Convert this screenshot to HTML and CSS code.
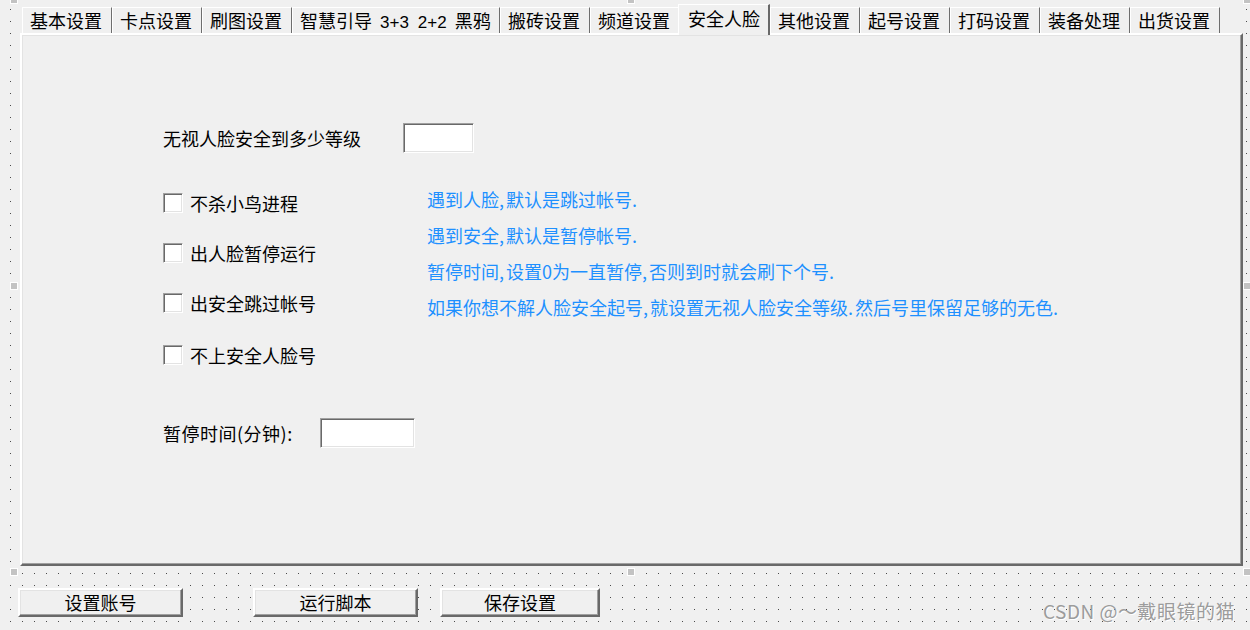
FILE: index.html
```html
<!DOCTYPE html>
<html lang="zh-CN">
<head>
    <meta charset="UTF-8">
    <title>安全人脸</title>
    <link rel="stylesheet" href="styles.css">
</head>
<body>
    <div class="designer">
        <div class="tabctl">
            <div class="tabs">
                <div class="tab">基本设置</div>
                <div class="tab">卡点设置</div>
                <div class="tab">刷图设置</div>
                <div class="tab wide">智慧引导<span class="num">3+3</span><span class="num">2+2</span><span class="tail">黑鸦</span></div>
                <div class="tab">搬砖设置</div>
                <div class="tab">频道设置</div>
                <div class="tab active">安全人脸</div>
                <div class="tab">其他设置</div>
                <div class="tab">起号设置</div>
                <div class="tab">打码设置</div>
                <div class="tab">装备处理</div>
                <div class="tab">出货设置</div>
            </div>
            <div class="panel">
                <div class="field-row">
                    <span class="field-label level-label">无视人脸安全到多少等级</span>
                    <span class="edit level-edit"></span>
                </div>
                <div class="opts">
                    <div class="checks">
                        <label class="check"><span class="box"></span>不杀小鸟进程</label>
                        <label class="check"><span class="box"></span>出人脸暂停运行</label>
                        <label class="check"><span class="box"></span>出安全跳过帐号</label>
                        <label class="check last"><span class="box"></span>不上安全人脸号</label>
                    </div>
                    <div class="notes">
                        <p>遇到人脸, 默认是跳过帐号.</p>
                        <p>遇到安全, 默认是暂停帐号.</p>
                        <p>暂停时间, 设置0为一直暂停, 否则到时就会刷下个号.</p>
                        <p>如果你想不解人脸安全起号, 就设置无视人脸安全等级. 然后号里保留足够的无色.</p>
                    </div>
                </div>
                <div class="field-row pause-row">
                    <span class="field-label pause-label">暂停时间(分钟):</span>
                    <span class="edit pause-edit"></span>
                </div>
            </div>
        </div>

        <div class="buttons">
            <div class="btn">设置账号</div>
            <div class="btn run">运行脚本</div>
            <div class="btn save">保存设置</div>
        </div>

        <!-- selection handles of the designer -->
        <span class="handle h-tl"></span>
        <span class="handle h-tm"></span>
        <span class="handle h-tr"></span>
        <span class="handle h-ml"></span>
        <span class="handle h-mr"></span>
        <span class="handle h-bl"></span>
        <span class="handle h-bm"></span>
        <span class="handle h-br"></span>

        <div class="watermark">CSDN @～戴眼镜的猫</div>
    </div>
</body>
</html>
```

FILE: styles.css
```css
body {
    margin: 0;
    font-family: "Noto Sans CJK SC", "Liberation Sans", sans-serif;
    font-size: 18px;
    color: #000;
}

.designer {
    position: relative;
    width: 1250px;
    height: 630px;
    overflow: hidden;
    background-color: #f0f0f0;
    background-image: conic-gradient(from 270deg at 1px 1px, #4a4a4a 90deg, transparent 0);
    background-size: 12px 12px;
    background-position: 10px 9px;
}

.tabctl {
    margin-left: 20px;
    width: 1223px;
    height: 566px;
    background: #f0f0f0;
}

.tabs {
    display: flex;
    align-items: flex-end;
    height: 33px;
    padding-left: 2px;
    box-sizing: border-box;
}

.tab {
    box-sizing: border-box;
    width: 90px;
    height: 26px;
    padding: 0 9px 0 7px;
    border-left: 1px solid #fff;
    border-top: 1px solid #fff;
    border-right: 1px solid #6e6e6e;
    line-height: 24px;
    white-space: nowrap;
}

.tab.wide {
    width: 208px;
}

.tab .num {
    display: inline-block;
    margin-left: 8px;
    font-family: "Liberation Sans", sans-serif;
    font-size: 17px;
}

.tab .num + .num {
    margin-left: 9px;
}

.tab .tail {
    margin-left: 8px;
}

.tab.active {
    position: relative;
    z-index: 2;
    width: 92px;
    height: 31px;
    margin-left: -2px;
    margin-bottom: -2px;
    padding: 0 8px 0 9px;
    border-right: 2px solid #696969;
    background: #f0f0f0;
    line-height: 26px;
}

.panel {
    height: 533px;
    box-sizing: border-box;
    padding: 88px 0 0 141px;
    border: 2px solid;
    border-color: #fff #696969 #696969 #fff;
    box-shadow: inset -1px -1px 0 #a0a0a0, inset 1px 1px 0 #e3e3e3;
}

.field-row {
    display: flex;
    align-items: center;
    height: 30px;
}

.level-label {
    width: 240px;
}

.pause-label {
    width: 157px;
    letter-spacing: 0.5px;
}

.edit {
    height: 30px;
    box-sizing: border-box;
    background: #fff;
    border: 1px solid;
    border-color: #a0a0a0 #fff #fff #a0a0a0;
    box-shadow: inset 1px 1px 0 #696969, inset -1px -1px 0 #e3e3e3;
}

.level-edit {
    width: 71px;
}

.pause-edit {
    width: 95px;
}

.opts {
    display: flex;
    margin-top: 40px;
}

.checks {
    display: flex;
    flex-direction: column;
    gap: 30px;
    width: 264px;
}

.check {
    display: flex;
    align-items: center;
    gap: 7px;
    height: 20px;
    line-height: 20px;
}

.check.last {
    margin-top: 2px;
}

.box {
    width: 20px;
    height: 20px;
    box-sizing: border-box;
    background: #fff;
    border: 1px solid;
    border-color: #a0a0a0 #fff #fff #a0a0a0;
    box-shadow: inset 1px 1px 0 #696969, inset -1px -1px 0 #e3e3e3;
}

.notes {
    margin-top: -12px;
    color: #1e90ff;
    line-height: 36px;
    white-space: nowrap;
    word-spacing: -2px;
}

.notes p {
    margin: 0;
}

.pause-row {
    margin-top: 53px;
}

.buttons {
    display: flex;
    margin-top: 22px;
    padding-left: 18px;
}

.btn {
    width: 165px;
    height: 29px;
    box-sizing: border-box;
    border: 2px solid;
    border-color: #fff #696969 #696969 #fff;
    box-shadow: inset -1px -1px 0 #a0a0a0, inset 1px 1px 0 #e3e3e3;
    background: #f0f0f0;
    text-align: center;
    line-height: 24px;
}

.btn.run {
    margin-left: 70px;
}

.btn.save {
    width: 160px;
    margin-left: 22px;
}

.handle {
    position: absolute;
    width: 8px;
    height: 8px;
    box-sizing: border-box;
    background: #c3c3c3;
    border: 1px solid #fff;
}

.h-tl { left: 10px; top: -4px; }
.h-tm { left: 627px; top: -4px; }
.h-tr { left: 1243px; top: -4px; }
.h-ml { left: 10px; top: 282px; }
.h-mr { left: 1243px; top: 282px; }
.h-bl { left: 10px; top: 568px; }
.h-bm { left: 627px; top: 568px; }
.h-br { left: 1243px; top: 568px; }

.watermark {
    position: absolute;
    right: 15px;
    top: 599px;
    color: #9c9c9c;
    text-shadow: 1px 1px 0 #fff;
    font-size: 19px;
    letter-spacing: 0.5px;
    line-height: 24px;
}
```
